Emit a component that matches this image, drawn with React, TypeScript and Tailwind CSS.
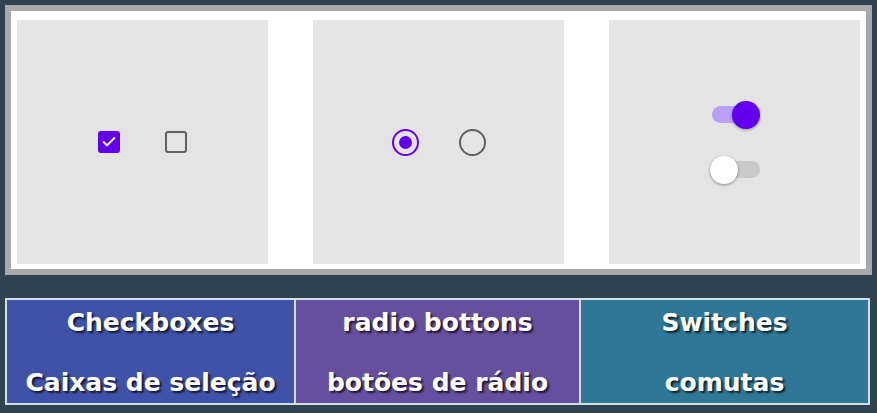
import { Check } from 'lucide-react'

const font = { fontFamily: '"DejaVu Sans", Verdana, sans-serif' }

function Panel({ children }: { children: React.ReactNode }) {
  return <div className="bg-[#e5e4e4] flex items-center justify-center">{children}</div>
}

export default function App() {
  return (
    <div className="w-[877px] h-[413px] bg-[#2f4350] pt-[5px] pl-[5px] overflow-hidden">
      <div className="w-[867px] h-[270px] border-[6px] border-[#a6aaac] bg-white pt-[9px] pb-[5px] px-[6px] grid grid-cols-3 gap-[45px]">
        <Panel>
          <div className="flex items-center gap-[45px]">
            <div className="w-[22px] h-[22px] rounded-[3px] bg-[#6200ee] flex items-center justify-center">
              <Check className="w-[16px] h-[16px] text-white" strokeWidth={3} />
            </div>
            <div className="w-[22px] h-[22px] rounded-[3px] border-[2.5px] border-[#616161]" />
          </div>
        </Panel>
        <Panel>
          <div className="flex items-center gap-[40px]">
            <div className="w-[27px] h-[27px] rounded-full border-[2.5px] border-[#6200ee] flex items-center justify-center">
              <div className="w-[13px] h-[13px] rounded-full bg-[#6200ee]" />
            </div>
            <div className="w-[27px] h-[27px] rounded-full border-[2.5px] border-[#5f5f5f]" />
          </div>
        </Panel>
        <Panel>
          <div className="flex flex-col items-center gap-[27px]">
            <div className="relative w-[50px] h-[28px] flex items-center pl-[2px]">
              <div className="w-[40px] h-[17px] rounded-full bg-[#b9a0f7]" />
              <div className="absolute right-0 top-0 w-[28px] h-[28px] rounded-full bg-[#6200ee] shadow-[0_1px_3px_rgba(0,0,0,0.35)]" />
            </div>
            <div className="relative w-[50px] h-[28px] flex items-center justify-end">
              <div className="w-[44px] h-[17px] rounded-full bg-[#c9c9c9]" />
              <div className="absolute left-0 top-0 w-[28px] h-[28px] rounded-full bg-white shadow-[0_1px_3px_rgba(0,0,0,0.4)]" />
            </div>
          </div>
        </Panel>
      </div>
      <div
        style={font}
        className="mt-[23px] w-[865px] h-[107px] border-2 border-[#d3dde8] grid grid-cols-3 text-white font-bold text-[25px] leading-[36px] text-center [text-shadow:2px_2px_2px_rgba(0,0,0,0.7)]"
      >
        <div className="bg-[#3f52a8] flex flex-col justify-between pt-[5px] pb-[2px]">
          <span>Checkboxes</span>
          <span>Caixas de seleção</span>
        </div>
        <div className="bg-[#664f9f] border-x-2 border-[#d3dde8] flex flex-col justify-between pt-[5px] pb-[2px]">
          <span>radio bottons</span>
          <span>botões de rádio</span>
        </div>
        <div className="bg-[#2f7797] flex flex-col justify-between pt-[5px] pb-[2px]">
          <span>Switches</span>
          <span>comutas</span>
        </div>
      </div>
    </div>
  )
}
